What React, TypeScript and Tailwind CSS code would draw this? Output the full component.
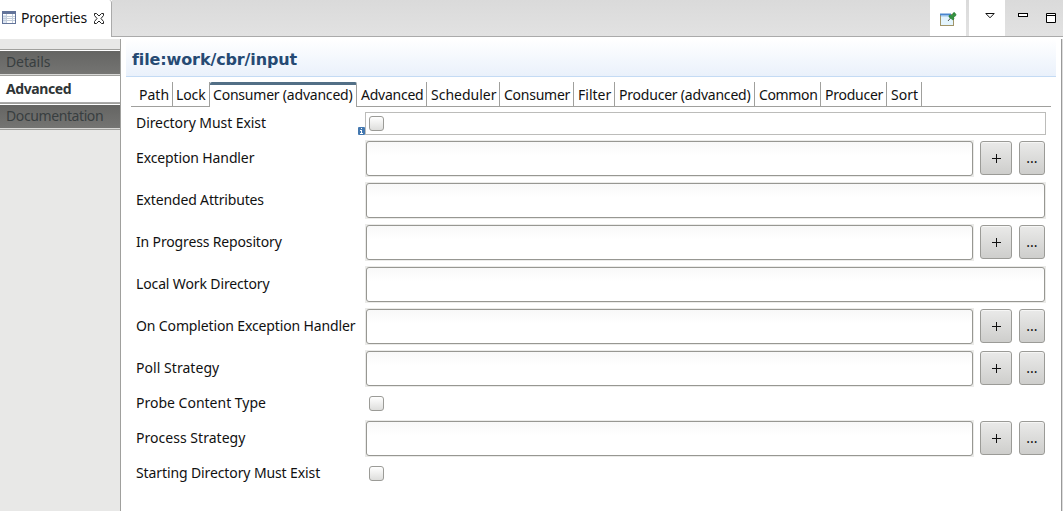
import React from "react";

const tabs = [
  { label: "Path", style: "w-[42px] pl-2" },
  { label: "Lock", style: "w-[37px] pl-[3px] tracking-[-0.1px]" },
  { label: "Consumer (advanced)", style: "w-[147px] pl-[3px] tracking-[-0.21px]", active: true },
  { label: "Advanced", style: "w-[70px] pl-1 tracking-[-0.25px]" },
  { label: "Scheduler", style: "w-[73px] pl-1" },
  { label: "Consumer", style: "w-[74px] pl-1 tracking-[-0.25px]" },
  { label: "Filter", style: "w-[41px] pl-1" },
  { label: "Producer (advanced)", style: "w-[140px] pl-1 tracking-[-0.21px]" },
  { label: "Common", style: "w-[66px] pl-1 tracking-[-0.35px]" },
  { label: "Producer", style: "w-[66px] pl-1 tracking-[-0.25px]" },
  { label: "Sort", style: "w-[35px] pl-1" },
];

type RowData = { label: string; kind: "framed" | "buttons" | "text" | "check"; spacing: string };

const rows: RowData[] = [
  { label: "Directory Must Exist", kind: "framed", spacing: "tracking-[-0.07px]" },
  { label: "Exception Handler", kind: "buttons", spacing: "tracking-[-0.12px]" },
  { label: "Extended Attributes", kind: "text", spacing: "tracking-[-0.16px]" },
  { label: "In Progress Repository", kind: "buttons", spacing: "tracking-[-0.15px]" },
  { label: "Local Work Directory", kind: "text", spacing: "tracking-[-0.13px]" },
  { label: "On Completion Exception Handler", kind: "buttons", spacing: "tracking-[-0.13px]" },
  { label: "Poll Strategy", kind: "buttons", spacing: "tracking-[0.05px]" },
  { label: "Probe Content Type", kind: "check", spacing: "" },
  { label: "Process Strategy", kind: "buttons", spacing: "tracking-[0.03px]" },
  { label: "Starting Directory Must Exist", kind: "check", spacing: "tracking-[-0.11px]" },
];

function Check() {
  return <span className="block size-[15px] rounded-[3px] border border-[#9b9b97] bg-linear-to-b from-white to-[#dededc]" />;
}

function Field() {
  return (
    <div className="h-[37px] min-w-0 flex-1 bg-[#ebebe9] p-px">
      <div className="h-full rounded-[3px] border border-[#979792] bg-linear-to-b from-[#f8f8f8] to-white to-40%" />
    </div>
  );
}

function Btn({ children, className }: { children: React.ReactNode; className: string }) {
  return (
    <button className={`mb-px flex h-[34px] items-center justify-center rounded-[3px] border border-[#9b9b97] bg-linear-to-b from-[#eaeae9] to-[#cececc] shadow-[inset_0_1px_0_#f6f6f5] ${className}`}>
      {children}
    </button>
  );
}

function Row({ label, kind, spacing }: RowData) {
  const tall = kind === "text" || kind === "buttons";
  return (
    <div className={`flex shrink-0 items-center ${tall ? "h-[37px]" : "h-[23px]"}`}>
      <div className={`w-[229px] whitespace-nowrap pb-[2px] leading-5 ${spacing}`}>{label}</div>
      {kind === "framed" && (
        <div className="relative flex h-[23px] flex-1 items-center border border-[#bcbcba] pl-[3px]">
          <Check />
          <svg className="absolute -left-[8px] top-[14px]" width="7" height="8" viewBox="0 0 7 8">
            <rect width="7" height="8" rx="1" fill="#4478b0" />
            <path d="M3 1h1v1H3zM2 3h2v3h1v1H2V6h1V4H2z" fill="#fff" />
          </svg>
        </div>
      )}
      {kind === "check" && <div className="pl-1"><Check /></div>}
      {kind === "text" && <Field />}
      {kind === "buttons" && (
        <>
          <Field />
          <Btn className="ml-[6px] w-8">
            <svg width="9" height="9" viewBox="0 0 9 9"><path d="M4 0h1v4h4v1H5v4H4V5H0V4h4z" fill="#111" /></svg>
          </Btn>
          <Btn className="ml-[7px] mr-px w-[26px]"><span className="leading-5">...</span></Btn>
        </>
      )}
    </div>
  );
}

function SideItem({ label, active, spacing }: { label: string; active?: boolean; spacing: string }) {
  return active ? (
    <div className={`flex h-[27px] items-center border-b border-[#aaa] bg-white pb-[2px] pl-[6px] font-bold text-[#2e3436] ${spacing}`}>{label}</div>
  ) : (
    <div className={`flex h-[27px] items-center border-y border-[#a0a09d] bg-linear-to-b from-[#646462] to-[#757573] pb-[2px] pl-[6px] text-[#383e40] shadow-[inset_0_1px_0_#fff,inset_0_-1px_0_#d8d8d6] ${spacing}`}>{label}</div>
  );
}

export default function App() {
  return (
    <div className="flex h-[511px] w-[1063px] flex-col overflow-hidden bg-white font-['Noto_Sans',sans-serif] text-[14px] text-[#111]">
      <header className="flex h-[37px] shrink-0">
        <div className="flex w-[112px] shrink-0 items-center rounded-tr-[3px] border-r border-[#aaa] bg-white pb-[2px] pl-[2px]">
          <svg width="14" height="13" viewBox="0 0 14 13" shapeRendering="crispEdges">
            <rect x=".5" y=".5" width="13" height="12" fill="#fff" stroke="#63749a" />
            <path d="M0 0h14v3H0z" fill="#63749a" />
            <path d="M1 4h3v8H1z" fill="#dce6f4" />
            <path d="M4.5 3v9M10.500 3v9M1 5.500h12M1 7.500h12M1 9.500h12" stroke="#c4cedb" />
          </svg>
          <span className="ml-[5px] w-[66px] whitespace-nowrap tracking-[-0.2px]">Properties</span>
          <svg className="ml-[6px] mt-px" width="12" height="11" viewBox="0 0 12 11">
            <path d="M1.500.5h2L6 3 8.500.5h2v2L8 5.500l2.500 3v2h-2L6 8l-2.500 2.500h-2v-2l2.500-3-2.500-3z" fill="#fff" stroke="#222" />
          </svg>
        </div>
        <div className="flex flex-1 border-b border-[#aaa] bg-linear-to-b from-[#dadada] to-[#e2e2e2]">
          <div className="ml-auto flex w-9 items-center justify-center bg-white pt-[2px]">
            <svg width="17" height="15" viewBox="0 0 17 15">
              <rect x=".5" y="2.500" width="13" height="11" fill="#e3f4fd" stroke="#a09468" />
              <path d="M0 1.500h11v2H0z" fill="#4a86cf" />
              <path d="M1 3.500h11v1H1z" fill="#9bc3ea" />
              <path d="M8 9l3-3.500" stroke="#555" />
              <path d="M9 3.500l2-.5 1.500 .5L13 1l1.500-.5L16 2.500 15.500 4 13.500 5l.5 2-1 1-4-3z" fill="#329440" stroke="#23752f" strokeWidth=".6" />
            </svg>
          </div>
          <div className="ml-[3px] flex w-9 justify-center bg-white pl-[6px] pt-[13px]">
            <svg width="10" height="6" viewBox="0 0 10 6"><path d="M.8.5h8.400L5 4.800z" fill="#fff" stroke="#111" /></svg>
          </div>
          <svg className="ml-[13px] mt-[13px]" width="10" height="4" viewBox="0 0 10 4"><rect x=".5" y=".5" width="9" height="3" fill="#fff" stroke="#000" /></svg>
          <svg className="ml-[18px] mr-[7px] mt-[13px]" width="10" height="10" viewBox="0 0 10 10"><path d="M.5.5h9v9h-9zM0 2.500h10" fill="#fff" stroke="#000" /></svg>
        </div>
      </header>
      <div className="mt-[2px] flex min-h-0 flex-1">
        <nav className="w-[121px] shrink-0 border-r border-[#a0a09d] bg-[#e8e8e7] pt-[10px]">
          <SideItem label="Details" spacing="tracking-[-0.1px]" />
          <SideItem label="Advanced" active spacing="tracking-[-0.4px]" />
          <SideItem label="Documentation" spacing="tracking-[-0.4px]" />
        </nav>
        <main className="w-[941px] border-r border-[#999] pl-[5px]">
          <h1 className="flex h-[38px] w-[930px] items-center border-b border-[#c4dbf4] bg-linear-to-b from-white to-[#eaf1fb] pl-[6px] pt-[4px] font-['DejaVu_Sans',sans-serif] text-[16px] font-bold tracking-[-0.12px] text-[#264a73]">file:work/cbr/input</h1>
          <div className="ml-[5px] mt-[5px] flex h-[25px] w-[920px]">
            {tabs.map((t, i) => (
              <div key={i} className={`shrink-0 whitespace-nowrap border-r border-[#a0a09d] ${t.active ? "rounded-t-[2px] border-t-[3px] border-t-[#526f86] leading-[19px]" : "border-b leading-[25px]"} ${t.style}`}>{t.label}</div>
            ))}
            <div className="flex-1 border-b border-[#a0a09d]" />
          </div>
          <div className="ml-[10px] mt-[5px] flex w-[910px] flex-col gap-[5px]">
            {rows.map((r) => <Row key={r.label} {...r} />)}
          </div>
        </main>
        <div className="w-px bg-[#ddd]" />
      </div>
    </div>
  );
}
